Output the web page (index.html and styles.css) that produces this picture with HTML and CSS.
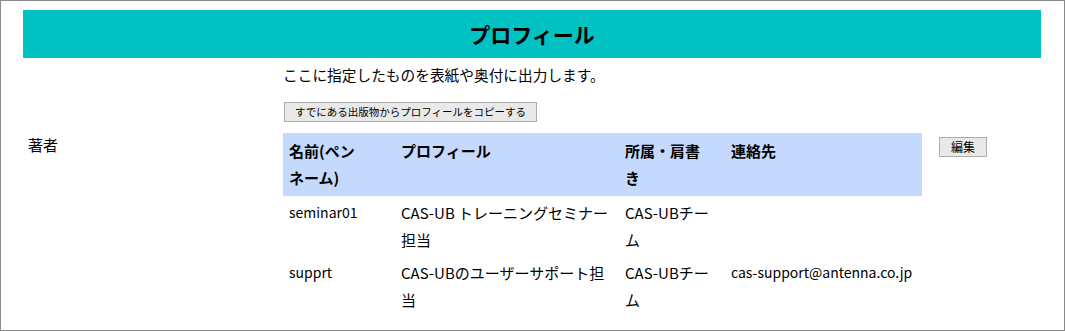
FILE: index.html
```html
<!DOCTYPE html>
<html>
<head>
  <meta charset="utf-8">
  <title>プロフィール</title>
  <link rel="stylesheet" href="styles.css">
</head>
<body>
  <div class="frame">
    <h1 class="title-bar">プロフィール</h1>

    <div class="form-row">
      <div class="label"></div>
      <div class="field">
        <p class="note">ここに指定したものを表紙や奥付に出力します。</p>
        <button class="btn btn-copy">すでにある出版物からプロフィールをコピーする</button>
      </div>
    </div>

    <div class="form-row author-row">
      <div class="label">著者</div>
      <table class="profiles">
        <thead>
          <tr>
            <th class="col-name">名前(ペンネーム)</th>
            <th class="col-profile">プロフィール</th>
            <th class="col-org">所属・肩書き</th>
            <th class="col-contact">連絡先</th>
          </tr>
        </thead>
        <tbody>
          <tr>
            <td class="col-name">seminar01</td>
            <td class="col-profile">CAS-UB トレーニングセミナー担当</td>
            <td class="col-org">CAS-UBチーム</td>
            <td class="col-contact"></td>
          </tr>
          <tr>
            <td class="col-name">supprt</td>
            <td class="col-profile">CAS-UBのユーザーサポート担当</td>
            <td class="col-org">CAS-UBチーム</td>
            <td class="col-contact">cas-support@antenna.co.jp</td>
          </tr>
        </tbody>
      </table>
      <button class="btn btn-edit">編集</button>
    </div>
  </div>
</body>
</html>
```

FILE: styles.css
```css
html, body {
  margin: 0;
  padding: 0;
  background-color: #fff;
}
body {
  font-family: "Noto Sans CJK JP", "Liberation Sans", sans-serif;
  font-size: 14px;
  color: #000;
}
.frame {
  box-sizing: border-box;
  width: 1065px;
  height: 331px;
  border: 1px solid #8a8a8a;
  padding: 9px 23px 0 22px;
}
.title-bar {
  margin: 0;
  height: 48px;
  display: flex;
  align-items: center;
  justify-content: center;
  background-color: #00c2c2;
  font-size: 21px;
  font-weight: bold;
}
.form-row {
  display: flex;
  align-items: flex-start;
}
.label {
  flex: 0 0 255px;
  padding-left: 5px;
  font-size: 15px;
  line-height: 20px;
}
.note {
  margin: 7px 0 0;
  font-size: 14.7px;
  line-height: 20px;
}
.btn {
  flex-shrink: 0;
  box-sizing: border-box;
  font-family: inherit;
  font-size: 12px;
  line-height: 16px;
  white-space: nowrap;
  color: #000;
  background-color: #e9e9e9;
  border: 1px solid #adadad;
  border-radius: 0;
  padding: 0;
  cursor: pointer;
}
.btn-copy {
  display: block;
  margin: 17px 0 0 1px;
  width: 253px;
  height: 20px;
  font-size: 10.5px;
}
.author-row {
  margin-top: 11px;
}
.author-row .label {
  padding-top: 2px;
}
.btn-edit {
  margin: 4px 0 0 17px;
  width: 48px;
  height: 20px;
}
.profiles {
  flex-shrink: 0;
  table-layout: fixed;
  width: 639px;
  border-collapse: collapse;
  font-size: 15px;
  line-height: 27px;
}
.profiles th,
.profiles td {
  box-sizing: border-box;
  vertical-align: top;
}
.profiles th {
  background-color: #c5d9fd;
  text-align: left;
  font-weight: bold;
  padding: 4px 6px 5px;
}
.profiles td {
  padding: 3px 6px;
}
.profiles .col-name {
  width: 112px;
}
.profiles th.col-name {
  padding-right: 34px;
}
.profiles .col-profile {
  width: 224px;
  padding-right: 4px;
}
.profiles .col-org {
  width: 106px;
  padding-right: 14px;
}
.profiles .col-contact {
  width: 197px;
}
.profiles td.col-name,
.profiles td.col-contact {
  font-size: 14px;
}
```
